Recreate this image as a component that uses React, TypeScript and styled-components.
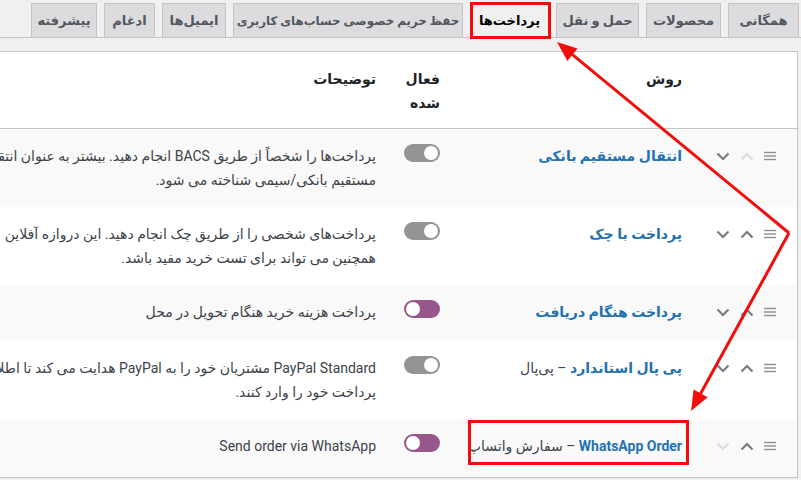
import React from 'react';
import styled, { createGlobalStyle } from 'styled-components';

const GlobalStyle = createGlobalStyle`
  html, body {
    margin: 0;
    padding: 0;
    background: #f0f0f1;
  }
  body {
    font-family: Roboto, "DejaVu Sans", sans-serif;
    font-size: 14px;
    color: #3c434a;
  }
`;

const tabs = [
  { label: 'همگانی', width: 71 },
  { label: 'محصولات', width: 75 },
  { label: 'حمل و نقل', width: 83 },
  { label: 'پرداخت‌ها', width: 79, active: true },
  { label: 'حفظ حریم خصوصی حساب‌های کاربری', width: 230, size: 11.8 },
  { label: 'ایمیل‌ها', width: 64 },
  { label: 'ادغام', width: 51 },
  { label: 'پیشرفته', width: 66 },
];

type Gateway = {
  name: string;
  suffix?: string;
  lines: string[];
  enabled: boolean;
  upOff?: boolean;
  downOff?: boolean;
};

const gateways: Gateway[] = [
  {
    name: 'انتقال مستقیم بانکی',
    lines: [
      'پرداخت‌ها را شخصاً از طریق BACS انجام دهید. بیشتر به عنوان انتقال',
      'مستقیم بانکی/سیمی شناخته می شود.',
    ],
    enabled: false,
    upOff: true,
  },
  {
    name: 'پرداخت با چک',
    lines: [
      'پرداخت‌های شخصی را از طریق چک انجام دهید. این دروازه آفلاین',
      'همچنین می تواند برای تست خرید مفید باشد.',
    ],
    enabled: false,
  },
  {
    name: 'پرداخت هنگام دریافت',
    lines: ['پرداخت هزینه خرید هنگام تحویل در محل'],
    enabled: true,
  },
  {
    name: 'پی پال استاندارد',
    suffix: 'پی‌پال',
    lines: [
      'PayPal Standard مشتریان خود را به PayPal هدایت می کند تا اطلاعات',
      'پرداخت خود را وارد کنند.',
    ],
    enabled: false,
  },
  {
    name: 'WhatsApp Order',
    suffix: 'سفارش واتساپ',
    lines: ['Send order via WhatsApp'],
    enabled: true,
    downOff: true,
  },
];

const Page = styled.div`
  position: relative;
  width: 801px;
  height: 480px;
  overflow: hidden;
  direction: rtl;
`;

const NavBar = styled.nav`
  display: flex;
  align-items: flex-end;
  gap: 7px;
  height: 34px;
  padding: 3px 2px 0 0;
  border-bottom: 1px solid #c3c4c7;
`;

const Tab = styled.a<{ $width: number; $active?: boolean; $size?: number }>`
  box-sizing: border-box;
  flex: none;
  width: ${p => p.$width}px;
  height: 35px;
  margin-bottom: -1px;
  display: flex;
  align-items: center;
  justify-content: center;
  white-space: nowrap;
  border: 1px solid #c3c4c7;
  border-bottom-color: ${p => (p.$active ? '#f0f0f1' : '#c3c4c7')};
  background: ${p => (p.$active ? '#f0f0f1' : '#dcdcde')};
  color: ${p => (p.$active ? '#000' : '#50575e')};
  font-size: ${p => p.$size ?? 13}px;
  font-weight: bold;
`;

const Table = styled.table`
  width: 1000px;
  margin: 13px 3px 0 0;
  border: 1px solid #c3c4c7;
  border-spacing: 0;
  table-layout: fixed;
  background: #fff;
`;

const HeadCell = styled.th`
  height: 48px;
  padding: 15px 10px 13px;
  text-align: right;
  vertical-align: top;
  line-height: 24px;
  font-size: 14px;
  font-weight: bold;
  color: #1d2327;
  border-bottom: 1px solid #c3c4c7;
`;

const Line = styled.div`
  height: 24px;
  line-height: 24px;
  white-space: nowrap;
`;

const Row = styled.tr`
  &:nth-child(odd) {
    background: #f9f9f9;
  }
  &:last-child td {
    padding-bottom: 17px;
  }
`;

const Cell = styled.td`
  height: 26px;
  padding: 15px 10px;
  text-align: right;
  vertical-align: top;
  line-height: 24px;
`;

const SortCell = styled(Cell)`
  padding-right: 21px;
`;

const SortTools = styled.div`
  display: flex;
  align-items: center;
  gap: 10px;
  height: 24px;
`;

const NameLine = styled(Line)`
  color: #3c434a;
`;

const NameLink = styled.a`
  color: #2271b1;
  font-weight: bold;
  text-decoration: none;
`;

const Desc = styled(Line)`
  color: #3c434a;
`;

const Toggle = styled.span<{ $on: boolean }>`
  position: relative;
  display: inline-block;
  vertical-align: top;
  width: 36px;
  height: 18px;
  border-radius: 9px;
  background: ${p => (p.$on ? '#96588a' : '#949494')};
  &::after {
    content: '';
    position: absolute;
    top: 2px;
    ${p => (p.$on ? 'left: 2px;' : 'right: 2px;')}
    width: 14px;
    height: 14px;
    border-radius: 50%;
    background: #fff;
  }
`;

const Overlay = styled.svg`
  position: absolute;
  left: 0;
  top: 0;
  pointer-events: none;
`;

const Handle = () => (
  <svg width="12" height="10" viewBox="0 0 12 10">
    <g stroke="#8c8f94" strokeWidth="1.4">
      <line x1="0" y1="1.5" x2="12" y2="1.5" />
      <line x1="0" y1="5" x2="12" y2="5" />
      <line x1="0" y1="8.5" x2="12" y2="8.5" />
    </g>
  </svg>
);

const Chevron = ({ up, off }: { up?: boolean; off?: boolean }) => (
  <svg width="14" height="9" viewBox="0 0 14 9">
    <polyline
      points={up ? '1.5,7.5 7,2 12.5,7.5' : '1.5,1.5 7,7 12.5,1.5'}
      fill="none"
      stroke={off ? '#dcdcde' : '#787c82'}
      strokeWidth="2.2"
    />
  </svg>
);

type Pt = [number, number];

const RED = '#f20d0d';

const Arrow = ({ from, tip }: { from: Pt; tip: Pt }) => {
  const dx = tip[0] - from[0];
  const dy = tip[1] - from[1];
  const l = Math.hypot(dx, dy);
  const ux = dx / l;
  const uy = dy / l;
  const len = 20;
  const half = 8;
  const bx = tip[0] - ux * len;
  const by = tip[1] - uy * len;
  const pts = [
    `${tip[0]},${tip[1]}`,
    `${bx - uy * half},${by + ux * half}`,
    `${bx + uy * half},${by - ux * half}`,
  ].join(' ');
  return (
    <g>
      <line x1={from[0]} y1={from[1]} x2={bx + ux * 2} y2={by + uy * 2} stroke={RED} strokeWidth="3" />
      <polygon points={pts} fill={RED} />
    </g>
  );
};

export default function App() {
  return (
    <Page>
      <GlobalStyle />
      <NavBar>
        {tabs.map(t => (
          <Tab key={t.label} $width={t.width} $active={t.active} $size={t.size}>
            {t.label}
          </Tab>
        ))}
      </NavBar>

      <Table>
        <colgroup>
          <col style={{ width: 105 }} />
          <col style={{ width: 242 }} />
          <col style={{ width: 64 }} />
          <col />
        </colgroup>
        <thead>
          <tr>
            <HeadCell />
            <HeadCell>
              <Line>روش</Line>
            </HeadCell>
            <HeadCell>
              <Line>فعال</Line>
              <Line>شده</Line>
            </HeadCell>
            <HeadCell>
              <Line>توضیحات</Line>
            </HeadCell>
          </tr>
        </thead>
        <tbody>
          {gateways.map(g => (
            <Row key={g.name}>
              <SortCell>
                <SortTools>
                  <Handle />
                  <Chevron up off={g.upOff} />
                  <Chevron off={g.downOff} />
                </SortTools>
              </SortCell>
              <Cell>
                <NameLine>
                  <NameLink href="#">{g.name}</NameLink>
                  {g.suffix && <> – {g.suffix}</>}
                </NameLine>
              </Cell>
              <Cell>
                <Toggle $on={g.enabled} />
              </Cell>
              <Cell>
                {g.lines.map(line => (
                  <Desc key={line}>{line}</Desc>
                ))}
              </Cell>
            </Row>
          ))}
        </tbody>
      </Table>

      <Overlay width="801" height="480" viewBox="0 0 801 480">
        <rect x="471.5" y="3.5" width="78" height="34" fill="none" stroke={RED} strokeWidth="3" />
        <rect x="469.5" y="421.5" width="218" height="42" fill="none" stroke={RED} strokeWidth="3" />
        <Arrow from={[789, 233]} tip={[557, 42]} />
        <Arrow from={[789, 233]} tip={[691, 411]} />
      </Overlay>
    </Page>
  );
}
